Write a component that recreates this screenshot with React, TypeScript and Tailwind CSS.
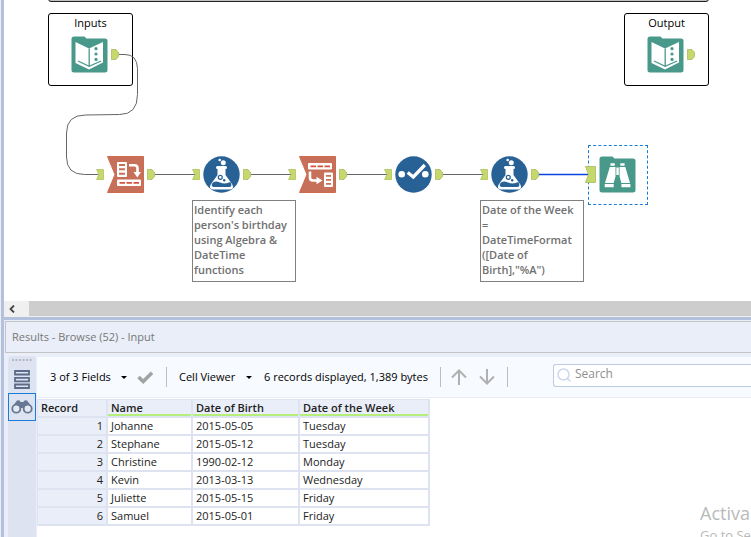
import type { ReactNode } from "react";

const records = [
  { name: "Johanne", birth: "2015-05-05", day: "Tuesday" },
  { name: "Stephane", birth: "2015-05-12", day: "Tuesday" },
  { name: "Christine", birth: "1990-02-12", day: "Monday" },
  { name: "Kevin", birth: "2013-03-13", day: "Wednesday" },
  { name: "Juliette", birth: "2015-05-15", day: "Friday" },
  { name: "Samuel", birth: "2015-05-01", day: "Friday" },
];

function InAnchor() {
  return (
    <svg width="8" height="11" viewBox="0 0 8 11" className="shrink-0">
      <path d="M.5.5h7v10h-7L3 5.500z" fill="#c5d86b" stroke="#b3c45f" strokeWidth=".8" />
    </svg>
  );
}

function OutAnchor() {
  return (
    <svg width="8" height="11" viewBox="0 0 8 11" className="shrink-0">
      <path d="M.5.5H5L7.500 3.500v4L5 10.500H.5z" fill="#c5d86b" stroke="#a9ba5c" strokeWidth=".8" />
    </svg>
  );
}

function BookIcon() {
  return (
    <svg width="37" height="37" viewBox="0 0 37 37" className="shrink-0">
      <path d="M3 .5h10.500l2 2H34a2.500 2.500 0 0 1 2.500 2.500v29a2.500 2.500 0 0 1-2.500 2.500H3A2.500 2.500 0 0 1 .5 34V3A2.500 2.500 0 0 1 3 .5z" fill="#48998a" />
      <path d="M4.500 6 18 12.500 32 6v20.500L18 33.500 4.500 27z" fill="#fff" />
      <path d="M18.200 12.500V30M7 25l11.200 5.300L30 25" fill="none" stroke="#48998a" strokeWidth="1.300" />
      <g fill="#48998a">
        <circle cx="25" cy="12.700" r="1.600" />
        <circle cx="25" cy="18" r="1.600" />
        <circle cx="25" cy="23.400" r="1.600" />
      </g>
    </svg>
  );
}

function TransposeIcon() {
  return (
    <svg width="37" height="37" viewBox="0 0 37 37" className="shrink-0">
      <path d="M.5.500h36v36H.5L8 18.500z" fill="#c66f59" stroke="#cf6a50" />
      <rect x="10" y="6" width="10" height="15" rx="1" fill="#fff" />
      <path d="M12 9h6M12 13.300h6M12 17.700h6" stroke="#c66f59" strokeWidth="2" />
      <path d="M22 9.200h5.500q3 0 3 3V17" fill="none" stroke="#fff" strokeWidth="2.600" />
      <path d="M26.500 16h7.500l-3.700 5.500z" fill="#fff" />
      <rect x="10" y="23.500" width="24" height="6.500" rx="1" fill="#fff" />
      <path d="M12.500 26.800h5.500M19.500 26.800H25M26.500 26.800H32" stroke="#d4553a" strokeWidth="1.800" />
    </svg>
  );
}

function CrossTabIcon() {
  return (
    <svg width="37" height="37" viewBox="0 0 37 37" className="shrink-0">
      <path d="M.5.500h36v36H.5L8 18.500z" fill="#c66f59" stroke="#cf6a50" />
      <rect x="9" y="7" width="24" height="6.500" rx="1" fill="#fff" />
      <path d="M11.500 10.300H17M18.500 10.300H24M25.500 10.300H31" stroke="#d4553a" strokeWidth="1.800" />
      <path d="M11 15.500v6q0 3 3 3h4" fill="none" stroke="#fff" strokeWidth="2.600" />
      <path d="M17.500 20.800 23.500 24.500l-6 3.700z" fill="#fff" />
      <rect x="25" y="16.500" width="9" height="14.500" rx="1" fill="#fff" />
      <path d="M27 19.800h5M27 23.800h5M27 27.800h5" stroke="#c66f59" strokeWidth="1.800" />
    </svg>
  );
}

function FlaskIcon() {
  return (
    <svg width="37" height="37" viewBox="0 0 37 37" className="shrink-0">
      <circle cx="18.500" cy="18.500" r="18.200" fill="#286196" />
      <circle cx="16.700" cy="4" r="1.300" fill="#fff" />
      <circle cx="20.300" cy="6.800" r="2.500" fill="#fff" />
      <rect x="13" y="10" width="11" height="3" rx="1.500" fill="#fff" />
      <path d="M14.500 11.500h8v7.500l6.800 9.500q2.200 4.500-2.300 5H10q-4.500-.500-2.300-5l6.800-9.500z" fill="#fff" />
      <path d="M10 26.500q3-1.800 7 0 5.500 2.200 10.200-.5l1 1.800q.8 3-2 3.300H11q-3-.3-2-3.300z" fill="#286196" />
      <circle cx="17.300" cy="21.300" r="2" fill="#fff" stroke="#286196" strokeWidth="1.200" />
      <circle cx="21.200" cy="24.200" r="1.200" fill="#286196" />
    </svg>
  );
}

function SelectIcon() {
  return (
    <svg width="37" height="37" viewBox="0 0 37 37" className="shrink-0">
      <circle cx="18.500" cy="18.500" r="18.200" fill="#286196" />
      <circle cx="6.700" cy="18.300" r="3.300" fill="#fff" />
      <circle cx="30.300" cy="18.300" r="3.300" fill="#fff" />
      <path d="m12.700 16.500 5.600 4.500L29.800 9" fill="none" stroke="#fff" strokeWidth="3.300" />
    </svg>
  );
}

function BrowseIcon() {
  return (
    <svg width="37" height="37" viewBox="0 0 37 37" className="shrink-0">
      <path d="M3 .5h10.500l2 2H34a2.500 2.500 0 0 1 2.500 2.500v29a2.500 2.500 0 0 1-2.500 2.500H3A2.500 2.500 0 0 1 .5 34V3A2.500 2.500 0 0 1 3 .5z" fill="#48998a" />
      <g fill="#fff">
        <path d="M11.500 7.200h4.300v2.500h-4.300zM21.300 7.200h4.300v2.500h-4.300z" />
        <path d="M10.800 11h5.700v9.500L14.700 27H6zM20.600 11h5.700L31 27h-8.700l-1.700-6.500z" />
        <path d="M17.300 11.500h2.500V19h-2.500z" />
        <path d="M5.700 28h9v3.200h-9zM22.400 28h9v3.200h-9z" />
      </g>
    </svg>
  );
}

function Tool({ place, children }: { place: string; children: ReactNode }) {
  return (
    <div className={`absolute top-[156px] flex items-center gap-[3px] ${place}`}>
      <InAnchor />
      {children}
      <OutAnchor />
    </div>
  );
}

function Container({ title, place }: { title: string; place: string }) {
  return (
    <section className={`absolute top-[13px] flex h-[73px] w-[85px] flex-col items-center rounded-[3px] border border-black bg-white pt-px ${place}`}>
      <h2 className="text-[11px] leading-4 text-black">{title}</h2>
      <div className="mt-[5px] flex items-center gap-[3px] pl-2">
        <BookIcon />
        <OutAnchor />
      </div>
    </section>
  );
}

function Note({ place, children }: { place: string; children: ReactNode }) {
  return (
    <p className={`absolute top-[200px] h-[82px] w-[104px] border border-[#808080] bg-white px-px pt-px text-[11px] leading-[15px] font-semibold text-[#707070] ${place}`}>
      {children}
    </p>
  );
}

function Workflow() {
  return (
    <main className="relative h-[301px] overflow-hidden bg-white">
      <div className="absolute -top-2 left-[44px] h-[10px] w-[661px] rounded-[3px] border border-[#222] bg-[#c0c0c0]" />
      <Container title="Inputs" place="left-[44px]" />
      <Container title="Output" place="left-[620px]" />

      <svg width="660" height="301" viewBox="4 0 660 301" fill="none" stroke="#666" className="absolute top-0 left-0">
        <path d="M119 54.500h6q12 0 12.500 14v26q0 20-18 20l-34 .500q-19 0-19 18v24q0 17.500 18 17.500h14" />
        <path d="M155 174.500h40M251 174.500h40M347 174.500h40M443 174.500h40" />
        <path d="M538 174.500h50" stroke="#0a45e0" strokeWidth="1.500" />
      </svg>

      <Tool place="left-[92px]"><TransposeIcon /></Tool>
      <Tool place="left-[188px]"><FlaskIcon /></Tool>
      <Tool place="left-[284px]"><CrossTabIcon /></Tool>
      <Tool place="left-[380px]"><SelectIcon /></Tool>
      <Tool place="left-[476px]"><FlaskIcon /></Tool>

      <div className="absolute top-[145px] left-[584px] flex h-[60px] w-[60px] border border-dashed border-[#1b7cd8] pt-[10px] pl-[10px]">
        <BrowseIcon />
      </div>
      <svg width="11" height="17" viewBox="0 0 11 17" className="absolute top-[166px] left-[581px]">
        <path d="M.5.5h10v16H.5l3-8z" fill="#c5d86b" stroke="#a9ba5c" strokeWidth=".8" />
      </svg>

      <Note place="left-[188px]">
        Identify each<br />person's birthday<br />using Algebra &amp;<br />DateTime<br />functions
      </Note>
      <Note place="left-[476px]">
        Date of the Week<br />=<br />DateTimeFormat<br />([Date of<br />Birth],"%A")
      </Note>
    </main>
  );
}

function Dropdown({ label, text }: { label: string; text: string }) {
  return (
    <label className="relative flex items-center">
      <select aria-label={label} className="appearance-none bg-transparent pr-4 text-black">
        <option>{text}</option>
      </select>
      <svg width="6" height="3" viewBox="0 0 6 3" className="pointer-events-none absolute right-0">
        <path d="M0 0h6L3 3z" fill="#000" />
      </svg>
    </label>
  );
}

function Toolbar() {
  return (
    <div className="flex h-[41px] items-center border-b border-[#e9eef6] bg-[#f7faff] pl-[13px] text-[11px] text-black">
      <Dropdown label="Fields" text="3 of 3 Fields" />
      <button aria-label="Apply" className="ml-[10px]">
        <svg width="17" height="13" viewBox="0 0 17 13">
          <path d="m1.500 6 4.700 4.500L15 1.800" fill="none" stroke="#a3a3a3" strokeWidth="3.600" />
        </svg>
      </button>
      <span className="mx-3 h-5 w-px bg-[#bdbdbd]" />
      <Dropdown label="Viewer" text="Cell Viewer" />
      <span className="ml-3 whitespace-nowrap">6 records displayed, 1,389 bytes</span>
      <span className="mr-[10px] ml-3 h-5 w-px bg-[#bdbdbd]" />
      <button aria-label="Previous">
        <svg width="16" height="16" viewBox="0 0 16 16" fill="none" stroke="#b0b0b0" strokeWidth="2">
          <path d="M8 16V1.500M1 8.500l7-7 7 7" />
        </svg>
      </button>
      <button aria-label="Next" className="ml-3">
        <svg width="16" height="16" viewBox="0 0 16 16" fill="none" stroke="#b0b0b0" strokeWidth="2">
          <path d="M8 0v14.500M1 7.500l7 7 7-7" />
        </svg>
      </button>
      <span className="ml-3 h-5 w-px bg-[#bdbdbd]" />
      <label className="mb-1 ml-[45px] flex h-[23px] min-w-0 flex-1 items-center gap-1 rounded-l-[3px] border border-r-0 border-[#bfcbe4] bg-white pl-[3px]">
        <svg width="14" height="14" viewBox="0 0 14 14" fill="none" stroke="#cdd8ee" strokeWidth="1.500" className="shrink-0">
          <circle cx="6.500" cy="6.500" r="5.500" />
          <path d="m10.500 10.500 3 3" />
        </svg>
        <input type="text" placeholder="Search" aria-label="Search" className="min-w-0 flex-1 pb-[2px] text-[12px] placeholder:text-[#8f8f8f] focus:outline-none" />
      </label>
    </div>
  );
}

function SideBar() {
  return (
    <aside className="flex w-7 shrink-0 flex-col items-center rounded-t bg-[#dde3f0]">
      <svg width="20" height="2" viewBox="0 0 20 2" className="mt-[3px]">
        <path d="M0 1h20" stroke="#b5b9c2" strokeWidth="2" strokeDasharray="2 1.500" />
      </svg>
      <button aria-label="Messages" className="mt-[7px] mb-[2px] flex h-[23px] w-7 items-center justify-center">
        <svg width="16" height="19" viewBox="0 0 16 19" fill="none" stroke="#5b6b88" strokeWidth="1.800">
          <path d="M1 1h14v3.500H1zM1 7.800h14v3.500H1zM1 14.500h14V18H1z" />
        </svg>
      </button>
      <button aria-label="Browse" className="flex h-7 w-7 items-center justify-center border border-[#1b7cd8]">
        <svg width="22" height="14" viewBox="0 0 22 14" className="shrink-0">
          <path d="M6 .5q3-1 3.500 1.500h3Q13 -.5 16 .5l4.500 6L18 12h-5l-1-4h-2l-1 4H4L1.500 6.500z" fill="#687893" />
          <circle cx="5.300" cy="8.700" r="4" fill="#e4e9f4" stroke="#687893" strokeWidth="1.800" />
          <circle cx="16.700" cy="8.700" r="4" fill="#e4e9f4" stroke="#687893" strokeWidth="1.800" />
        </svg>
      </button>
    </aside>
  );
}

function HeadCell({ width, children }: { width: string; children: ReactNode }) {
  return (
    <th className={`border-r-2 border-b-2 border-[#dde3f0] bg-[#e9eef8] p-0 text-left font-semibold ${width}`}>
      <div className="h-4 border-b-2 border-[#b6ee7c] pl-[3px] leading-4">{children}</div>
    </th>
  );
}

function Cell({ children }: { children: ReactNode }) {
  return <td className="border-r-2 border-b-2 border-[#dde3f0] bg-white p-0 pl-[3px]">{children}</td>;
}

function ResultsTable() {
  return (
    <table className="mt-px w-[393px] table-fixed border-separate border-spacing-0 border-t border-l border-[#dde3f0] text-[11px] leading-4 text-[#222]">
      <thead>
        <tr>
          <th className="w-[70px] border-r-2 border-b-2 border-[#dde3f0] bg-[#e9eef8] p-0 pl-[3px] text-left font-semibold">Record</th>
          <HeadCell width="w-[85px]">Name</HeadCell>
          <HeadCell width="w-[107px]">Date of Birth</HeadCell>
          <HeadCell width="w-[130px]">Date of the Week</HeadCell>
        </tr>
      </thead>
      <tbody>
        {records.map((r, i) => (
          <tr key={r.name}>
            <td className="border-r-2 border-b-2 border-[#dde3f0] bg-[#e9eef8] p-0 pr-[3px] text-right">{i + 1}</td>
            <Cell>{r.name}</Cell>
            <Cell>{r.birth}</Cell>
            <Cell>{r.day}</Cell>
          </tr>
        ))}
      </tbody>
    </table>
  );
}

export default function App() {
  return (
    <div className="relative flex min-h-screen overflow-hidden bg-[#e9eef8] font-['Open_Sans','Noto_Sans',sans-serif]">
      <div className="ml-px w-[3px] shrink-0 bg-[#b3c1de]" />
      <div className="flex min-w-0 flex-1 flex-col">
        <Workflow />
        <div className="flex h-4 bg-[#f0f0f0]">
          <button aria-label="Scroll left" className="flex w-[25px] items-center pl-[5px]">
            <svg width="6" height="8" viewBox="0 0 6 8">
              <path d="M5 .5 1.500 4 5 7.500" fill="none" stroke="#444" strokeWidth="1.800" />
            </svg>
          </button>
          <div className="mb-px flex-1 bg-[#cdcdcd]" />
        </div>
        <div className="h-[3px] bg-[#b3c1de]" />
        <h1 className="mt-px ml-px flex h-8 items-center border border-r-0 border-[#c3c3c3] bg-[#e9eef8] pl-[6px] text-[11px] text-[#777]">
          Results - Browse (52) - Input
        </h1>
        <div className="mt-[3px] flex flex-1 pl-1">
          <SideBar />
          <div className="mt-px ml-px min-w-0 flex-1 bg-white">
            <Toolbar />
            <ResultsTable />
          </div>
        </div>
      </div>
      <div className="absolute right-0 bottom-0 h-9 w-[51px] overflow-hidden whitespace-nowrap text-[#b9b9b9]">
        <p className="text-[18px] leading-6">Activa</p>
        <p className="text-[13px] leading-5">Go to Se</p>
      </div>
    </div>
  );
}
